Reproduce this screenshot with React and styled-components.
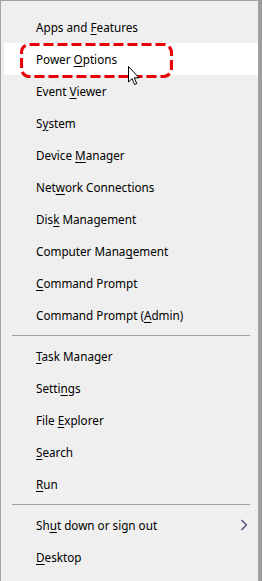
import styled, { createGlobalStyle } from "styled-components";

const GlobalStyle = createGlobalStyle`
  html, body {
    margin: 0;
    padding: 0;
    background: #9c9c9c;
  }
  body {
    font-family: "Noto Sans", "Open Sans", sans-serif;
  }
`;

const Page = styled.div`
  width: 262px;
  height: 581px;
  overflow: hidden;
  display: flex;
`;

const Menu = styled.div`
  position: relative;
  width: 259px;
  height: 581px;
  box-sizing: border-box;
  background: #efefef;
  border: 1px solid #a3a3a3;
  border-bottom: none;
  padding: 10px 0 8px;
  display: flex;
  flex-direction: column;
`;

const Item = styled.div`
  height: 32px;
  display: flex;
  align-items: center;
  justify-content: space-between;
  padding: 0 10px 0 35px;
  margin-left: ${(p) => (p.$active ? "3px" : "0")};
  padding-left: ${(p) => (p.$active ? "32px" : "35px")};
  background: ${(p) => (p.$active ? "#ffffff" : "transparent")};
  color: #000;
  font-size: 11.7px;
  white-space: nowrap;
`;

const Key = styled.span`
  text-decoration: underline;
  text-decoration-thickness: 1px;
  text-underline-offset: 2px;
`;

const Separator = styled.div`
  height: 9px;
  display: flex;
  align-items: center;
  padding: 0 8px 0 11px;

  &::after {
    content: "";
    flex: 1;
    height: 1px;
    background: #a0a0a0;
  }
`;

const Outline = styled.svg`
  position: absolute;
  left: 19px;
  top: 42px;
`;

const Cursor = styled.svg`
  position: absolute;
  left: 126px;
  top: 64px;
`;

const Chevron = styled.svg`
  display: block;
`;

function Label({ text, k }) {
  const i = text.indexOf(k);
  return (
    <span>
      {text.slice(0, i)}
      <Key>{k}</Key>
      {text.slice(i + k.length)}
    </span>
  );
}

const groups = [
  [
    ["Apps and Features", "F"],
    ["Power Options", "O"],
    ["Event Viewer", "V"],
    ["System", "y"],
    ["Device Manager", "M"],
    ["Network Connections", "w"],
    ["Disk Management", "k"],
    ["Computer Management", "g"],
    ["Command Prompt", "C"],
    ["Command Prompt (Admin)", "A"],
  ],
  [
    ["Task Manager", "T"],
    ["Settings", "n"],
    ["File Explorer", "E"],
    ["Search", "S"],
    ["Run", "R"],
  ],
  [
    ["Shut down or sign out", "u", true],
    ["Desktop", "D"],
  ],
];

export default function App() {
  return (
    <Page>
      <GlobalStyle />
      <Menu>
        {groups.map((group, gi) => (
          <div key={gi}>
            {gi > 0 && <Separator />}
            {group.map(([text, k, sub]) => (
              <Item key={text} $active={text === "Power Options"}>
                <Label text={text} k={k} />
                {sub && (
                  <Chevron width="8" height="12" viewBox="0 0 8 12">
                    <path d="M1.5 1 L6.5 6 L1.5 11" fill="none" stroke="#4a3f7a" strokeWidth="1.2" />
                  </Chevron>
                )}
              </Item>
            ))}
          </div>
        ))}
        <Outline width="153" height="35" viewBox="0 0 153 35">
          <rect
            x="1.5"
            y="1.5"
            width="150"
            height="32"
            rx="8"
            fill="none"
            stroke="#e8000b"
            strokeWidth="3.2"
            strokeDasharray="10 4"
          />
        </Outline>
        <Cursor width="14" height="22" viewBox="0 0 14 22">
          <path
            d="M1.5 1.5 L1.5 17 L5 13.6 L7.6 19.6 L9.8 18.7 L7.3 12.8 L12 12.8 Z"
            fill="#fff"
            stroke="#000"
            strokeWidth="1"
            strokeLinejoin="miter"
          />
        </Cursor>
      </Menu>
    </Page>
  );
}
